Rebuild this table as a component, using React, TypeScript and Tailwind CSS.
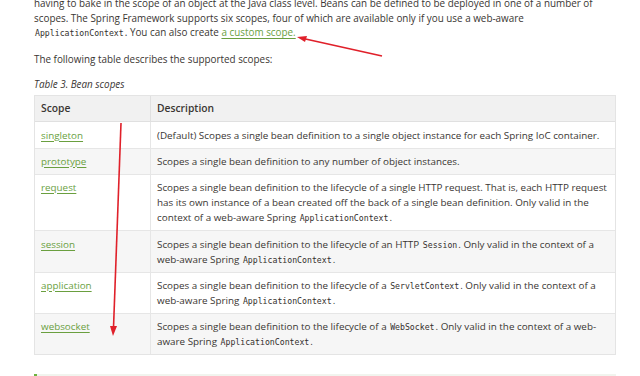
import type { ReactNode } from "react";

const body = { fontFamily: '"Open Sans", "Noto Sans", sans-serif' };
const mono = { fontFamily: '"DejaVu Sans Mono", "Liberation Mono", monospace' };

function Code({ children }: { children: ReactNode }) {
  return (
    <code style={mono} className="text-[8.2px] leading-none text-[#34302d] px-[1px]">
      {children}
    </code>
  );
}

function Link({ children }: { children: ReactNode }) {
  return <a className="text-[#6a9f3f] underline underline-offset-2">{children}</a>;
}

interface Row {
  scope: string;
  lines: ReactNode[];
  tall?: boolean;
}

const ROWS: Row[] = [
  {
    scope: "singleton",
    tall: true,
    lines: ["(Default) Scopes a single bean definition to a single object instance for each Spring IoC container."],
  },
  {
    scope: "prototype",
    lines: ["Scopes a single bean definition to any number of object instances."],
  },
  {
    scope: "request",
    lines: [
      "Scopes a single bean definition to the lifecycle of a single HTTP request. That is, each HTTP request",
      "has its own instance of a bean created off the back of a single bean definition. Only valid in the",
      <>
        context of a web-aware Spring <Code>ApplicationContext</Code>.
      </>,
    ],
  },
  {
    scope: "session",
    tall: true,
    lines: [
      <>
        Scopes a single bean definition to the lifecycle of an HTTP <Code>Session</Code>. Only valid in the context of a
      </>,
      <>
        web-aware Spring <Code>ApplicationContext</Code>.
      </>,
    ],
  },
  {
    scope: "application",
    lines: [
      <>
        Scopes a single bean definition to the lifecycle of a <Code>ServletContext</Code>. Only valid in the context of a
      </>,
      <>
        web-aware Spring <Code>ApplicationContext</Code>.
      </>,
    ],
  },
  {
    scope: "websocket",
    lines: [
      <>
        Scopes a single bean definition to the lifecycle of a <Code>WebSocket</Code>. Only valid in the context of a web-
      </>,
      <>
        aware Spring <Code>ApplicationContext</Code>.
      </>,
    ],
  },
];

export default function App() {
  return (
    <div style={body} className="relative w-[640px] h-[376px] overflow-hidden bg-white text-[#3a3633]">
      <div className="ml-[34px] w-[582px] -mt-[4px]">
        <p className="text-[9.9px] leading-[14.5px] whitespace-nowrap">
          <span className="block">
            having to bake in the scope of an object at the Java class level. Beans can be defined to be deployed in one of a number of
          </span>
          <span className="block">
            scopes. The Spring Framework supports six scopes, four of which are available only if you use a web-aware
          </span>
          <span className="block">
            <Code>ApplicationContext</Code>. You can also create <Link>a custom scope.</Link>
          </span>
        </p>
        <p className="text-[9.9px] leading-[14.5px] mt-[12px]">The following table describes the supported scopes:</p>
        <p className="text-[9.9px] leading-[14.5px] italic mt-[11px]">Table 3. Bean scopes</p>

        <div className="mt-[3px] border border-[#e4e4e4] text-[9.85px] leading-[15px] whitespace-nowrap">
          <div className="flex bg-[#f1f1f1] border-b border-[#e0e0e0]">
            <div className="w-[116px] shrink-0 px-[6px] py-[5px] border-r border-[#e0e0e0] text-[10.3px] font-semibold">Scope</div>
            <div className="flex-1 px-[6px] py-[5px] text-[10.3px] font-semibold">Description</div>
          </div>
          {ROWS.map((r, i) => (
            <div
              key={r.scope}
              className={`flex ${i % 2 === 1 ? "bg-[#f6f6f6]" : "bg-white"} ${i < ROWS.length - 1 ? "border-b border-[#e6e6e6]" : ""}`}
            >
              <div className={`w-[116px] shrink-0 px-[6px] ${r.tall ? "pt-[6px]" : "pt-[5px]"} pb-[5px] border-r border-[#e6e6e6]`}>
                <Link>{r.scope}</Link>
              </div>
              <div className={`flex-1 px-[6px] ${r.tall ? "pt-[6px]" : "pt-[5px]"} pb-[5px]`}>
                {r.lines.map((l, j) => (
                  <span key={j} className="block">
                    {l}
                  </span>
                ))}
              </div>
            </div>
          ))}
        </div>

        <div className="mt-[19px] h-[20px] bg-[#f1f4ee] border-l-[3px] border-[#6db33f]" />
      </div>

      <svg className="absolute inset-0 pointer-events-none" width="640" height="376">
        <line x1="382" y1="56" x2="301" y2="38" stroke="#e0202a" strokeWidth="1.6" />
        <polygon points="297,37 307,36 305,42" fill="#e0202a" />
        <line x1="121" y1="123" x2="113.5" y2="328" stroke="#e0202a" strokeWidth="1.6" />
        <polygon points="113,336 110,326 117,326" fill="#e0202a" />
      </svg>
    </div>
  );
}
